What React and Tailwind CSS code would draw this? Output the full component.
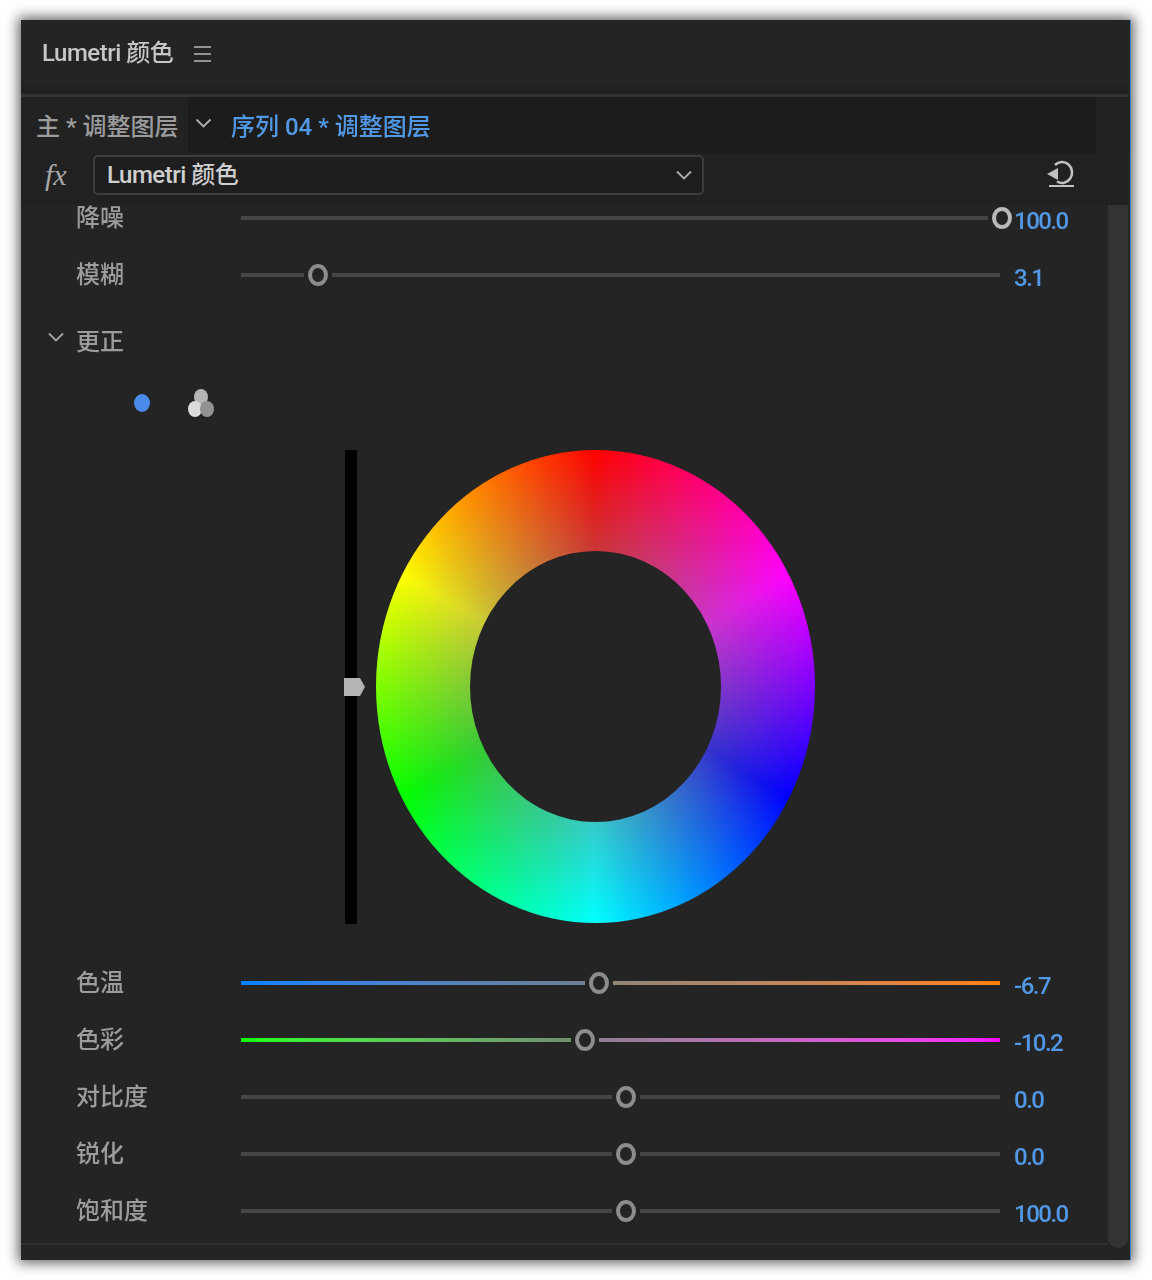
import React from "react";

// slider rows, left = track length before the thumb
const topRows = [
  { label: "降噪", value: "100.0", left: "w-[747px]", thumb: "border-[#b9b9b9]", first: true },
  { label: "模糊", value: "3.1", left: "w-[63px]" },
];

const bottomRows = [
  {
    label: "色温",
    value: "-6.7",
    left: "w-[344px] bg-gradient-to-r from-[#0080ff] to-[#6e7f92]",
    right: "bg-gradient-to-r from-[#8f8578] to-[#ff8000]",
  },
  {
    label: "色彩",
    value: "-10.2",
    left: "w-[330px] bg-gradient-to-r from-[#00ff00] to-[#6f8f6f]",
    right: "bg-gradient-to-r from-[#8f7f8f] to-[#ff00ff]",
  },
  { label: "对比度", value: "0.0", left: "w-[371px]" },
  { label: "锐化", value: "0.0", left: "w-[371px]" },
  { label: "饱和度", value: "100.0", left: "w-[371px]" },
];

const Chevron = ({ className }) => (
  <svg viewBox="0 0 16 10" className={className} fill="none" stroke="currentColor" strokeWidth="1.8">
    <path d="M1 1.5 L8 8.5 L15 1.5" />
  </svg>
);

const SliderRow = ({ label, value, left, right, thumb, first }) => (
  <div className={`flex items-center h-[57px] pl-[55px] ${first ? "-mt-[16px]" : ""}`}>
    <div className="w-[165px] shrink-0 text-[24px] text-[#9c9c9c]">{label}</div>
    <div className="flex items-center w-[759px] shrink-0">
      <div className={`h-[4px] shrink-0 bg-[#454545] ${left || ""}`} />
      <div
        className={`w-[20px] h-[22px] mx-[4px] shrink-0 rounded-[50%] border-[4px] ${thumb || "border-[#8c8c8c]"}`}
      />
      <div className={`h-[4px] flex-1 bg-[#454545] ${right || ""}`} />
    </div>
    <div className="ml-[14px] mt-[6px] text-[24px] tracking-[-1.5px] text-[#5199e6] whitespace-nowrap">{value}</div>
  </div>
);

const ColorWheel = () => (
  <div className="flex items-start h-[474px] pl-[324px]">
    <div className="relative w-[12px] h-[474px] bg-black shrink-0">
      <svg viewBox="0 0 21 18" className="absolute left-[-1px] top-[228px] w-[21px] h-[18px]">
        <path d="M0 0 H16 L21 9 L16 18 H0 Z" fill="#b4b4b4" />
      </svg>
    </div>
    <div className="ml-[19px] w-[439px] h-[473px] rounded-[50%] flex items-center justify-center bg-[radial-gradient(closest-side,rgba(128,128,128,0.42)_57%,rgba(128,128,128,0)_100%),conic-gradient(#ff0000,#ff00ff_60deg,#0000ff_120deg,#00ffff_180deg,#00ff00_240deg,#ffff00_300deg,#ff0000)]">
      <div className="w-[251px] h-[271px] rounded-[50%] bg-[#242424]" />
    </div>
  </div>
);

export default function App() {
  return (
    <div className="min-h-[1280px] bg-white pt-[20px] pl-[21px] font-medium font-['Roboto','Noto_Sans_CJK_SC',sans-serif]">
      <div className="w-[1110px] h-[1240px] flex flex-col overflow-hidden bg-[#242424] border-r border-[#3f83c9] shadow-[0_0_12px_3px_rgba(0,0,0,0.6)] blur-[0.4px]">
        {/* Panel title */}
        <div className="flex items-center shrink-0 h-[65px] pl-[21px] pt-[1px]">
          <span className="text-[24px] tracking-[-0.5px] text-[#c6c6c6]">Lumetri 颜色</span>
          <svg viewBox="0 0 17 16" className="ml-[21px] mt-[2px] w-[17px] h-[16px]" stroke="#b8b8b8" strokeWidth="1.6">
            <path d="M0 1 H17 M0 8 H17 M0 15 H17" />
          </svg>
        </div>
        <div className="shrink-0 h-[12px] mr-[2px] bg-[#212121] border-b-[3px] border-[#333333]" />

        {/* Clip tabs */}
        <div className="flex shrink-0 h-[56px] bg-[#222222]">
          <div className="flex items-center w-[167px] pl-[15px] pt-[3px] text-[24px] text-[#9c9c9c] whitespace-nowrap">
            主 * 调整图层
          </div>
          <div className="flex items-center w-[908px] bg-[#1c1c1c] text-[24px] text-[#5199e6]">
            <Chevron className="ml-[7px] mt-[-5px] w-[17px] h-[10px] text-[#b0b0b0]" />
            <span className="ml-[19px] pt-[3px]">序列 04 * 调整图层</span>
          </div>
        </div>

        {/* Effect select */}
        <div className="flex items-center shrink-0 h-[52px] mr-[2px] bg-[#212121] relative z-10">
          <span className="w-[72px] pl-[24px] pb-[8px] text-[30px] leading-none italic font-normal text-[#a8a8a8] font-['Liberation_Serif',serif]">
            fx
          </span>
          <div className="flex items-center justify-between w-[611px] h-[40px] pl-[12px] pr-[10px] mb-[9px] bg-[#1e1e1e] border-2 border-[#3d3d3d] rounded-[5px]">
            <span className="text-[24px] tracking-[-0.5px] text-[#cfcfcf]">Lumetri 颜色</span>
            <Chevron className="w-[16px] h-[10px] text-[#b0b0b0]" />
          </div>
          <svg viewBox="0 0 28 28" className="ml-[343px] mb-[11px] w-[28px] h-[28px]" fill="none" stroke="#c2c2c2" strokeWidth="2.6">
            <path d="M8 5 A10 10.500 0 1 1 10 21.500" />
            <path d="M0 14 L11 8 V20 Z" fill="#c2c2c2" stroke="none" />
            <path d="M2 26 H27" strokeWidth="2" />
          </svg>
        </div>

        {/* Scrolling controls */}
        <div className="flex flex-1 min-h-0">
          <div className="flex-1 min-w-0 overflow-hidden">
            {topRows.map((row) => (
              <SliderRow key={row.label} {...row} />
            ))}

            <div className="flex items-center h-[56px] mt-[11px] pl-[27px]">
              <Chevron className="w-[16px] h-[10px] mb-[10px] text-[#a8a8a8]" />
              <span className="ml-[12px] text-[24px] text-[#9c9c9c]">更正</span>
            </div>

            <div className="flex items-center h-[36px] mt-[15px] pl-[113px]">
              <div className="w-[16px] h-[18px] rounded-[50%] bg-[#4a8ae8]" />
              <svg viewBox="0 0 26 28" className="ml-[38px] w-[26px] h-[28px]">
                <ellipse cx="13" cy="8" rx="7" ry="8" fill="#b5b5b5" />
                <ellipse cx="7" cy="20" rx="7" ry="8" fill="#dcdcdc" />
                <ellipse cx="19" cy="20" rx="7" ry="8" fill="#929292" />
              </svg>
            </div>

            <div className="mt-[29px]">
              <ColorWheel />
            </div>

            <div className="mt-[30px]">
              {bottomRows.map((row) => (
                <SliderRow key={row.label} {...row} />
              ))}
            </div>

            <div className="h-[2px] mt-[4px] bg-[#303030]" />
          </div>

          {/* Scrollbar */}
          <div className="w-[20px] h-[1043px] mr-[2px] rounded-b-[10px] bg-[#333333] shrink-0" />
        </div>
      </div>
    </div>
  );
}
